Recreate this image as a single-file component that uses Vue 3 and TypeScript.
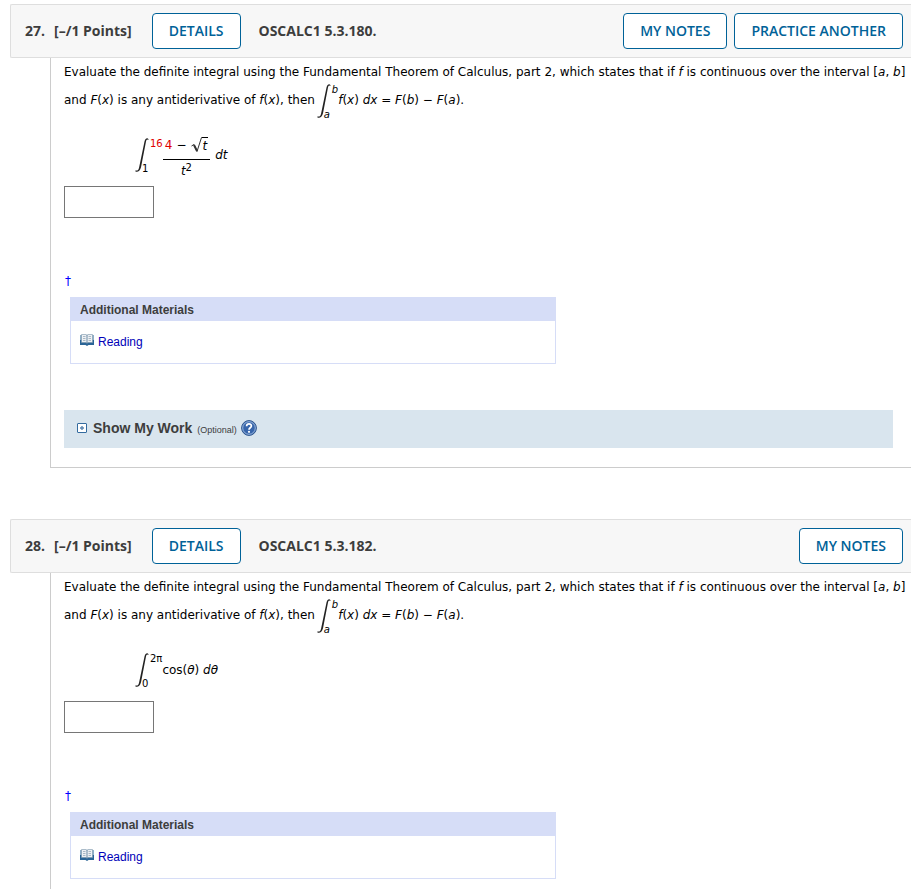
<script setup lang="ts">
interface Question {
  number: number
  source: string
  actions: string[]
  upper: string
  lower: string
  kind: 'fraction' | 'cosine'
  showWork: boolean
}

const questions: Question[] = [
  {
    number: 27,
    source: 'OSCALC1 5.3.180.',
    actions: ['MY NOTES', 'PRACTICE ANOTHER'],
    upper: '16',
    lower: '1',
    kind: 'fraction',
    showWork: true,
  },
  {
    number: 28,
    source: 'OSCALC1 5.3.182.',
    actions: ['MY NOTES'],
    upper: '2π',
    lower: '0',
    kind: 'cosine',
    showWork: false,
  },
]

const integralPath =
  'M13.5 2.2C12.8 .7 10.4 .6 9.5 4.4L4.1 30.4C3.5 33.4 1.8 34.2 .6 33.2L.4 34.4C2.3 35.4 5 34.4 6 30.2L11 4.6C11.4 2.4 12.2 1.8 13.3 3Z'
</script>

<template>
  <main class="page">
    <article v-for="q in questions" :key="q.number" class="question">
      <header class="bar">
        <span class="number">{{ q.number }}.</span>
        <span class="points">[–/1 Points]</span>
        <button type="button" class="btn">DETAILS</button>
        <span class="source">{{ q.source }}</span>
        <div class="actions">
          <button v-for="a in q.actions" :key="a" type="button" class="btn">{{ a }}</button>
        </div>
      </header>

      <section class="body">
        <p class="prompt">
          <span>Evaluate the definite integral using the Fundamental Theorem of Calculus, part 2, which states that if
          <i>f</i> is continuous over the interval [<i>a</i>, <i>b</i>]</span> <span>and <i>F</i>(<i>x</i>) is any
          antiderivative of <i>f</i>(<i>x</i>), then <span class="integral inline">
            <svg class="sign" viewBox="0 0 14 36" aria-hidden="true"><path :d="integralPath" /></svg>
            <span class="limits"><i>b</i><i class="lower">a</i></span>
          </span><i>f</i>(<i>x</i>) <i>dx</i> = <i>F</i>(<i>b</i>) − <i>F</i>(<i>a</i>).</span>
        </p>

        <div class="expression">
          <span class="integral">
            <svg class="sign" viewBox="0 0 14 36" aria-hidden="true"><path :d="integralPath" /></svg>
            <span class="limits">
              <span :class="{ given: q.kind === 'fraction' }">{{ q.upper }}</span>
              <span class="lower">{{ q.lower }}</span>
            </span>
          </span>
          <template v-if="q.kind === 'fraction'">
            <span class="fraction">
              <span class="numerator">
                <span class="given">4</span><span class="minus">−</span>
                <svg class="radical" viewBox="0 0 11 16" aria-hidden="true">
                  <path d="M.5 9L3 7.5L6 14.5L10.5 .5H11" />
                  <path class="thick" d="M3 8L6 14" />
                </svg>
                <i class="radicand">t</i>
              </span>
              <span class="denominator"><i>t</i><sup>2</sup></span>
            </span>
            <i class="differential">dt</i>
          </template>
          <span v-else>cos(<i>θ</i>) <i>dθ</i></span>
        </div>

        <input class="answer" type="text" :aria-label="`Answer to question ${q.number}`" />

        <a class="dagger" href="#">†</a>

        <section class="materials">
          <h3>Additional Materials</h3>
          <a class="reading" href="#">
            <svg class="book" viewBox="0 0 14 12" aria-hidden="true">
              <path fill="#8fb0c8" d="M0 1H14V7H0Z" />
              <path fill="#2a6496" d="M0 6H14V11H8.5L7 12L5.5 11H0Z" />
              <path fill="#eef1f4" stroke="#7894aa" stroke-width=".6" d="M1.5 .5H6L7 1.2L8 .5H12.5V8.5H8L7 9.3L6 8.5H1.5Z" />
              <path fill="#a9b8c5" d="M3 2H5.5V3H3ZM3 4H5.5V5H3ZM3 6H5.5V7H3ZM8.5 2H11V3H8.5ZM8.5 4H11V5H8.5ZM8.5 6H11V7H8.5Z" />
              <path fill="#4f7595" d="M6.6 1H7.4V9.5H6.6Z" />
            </svg>
            <span>Reading</span>
          </a>
        </section>

        <div v-if="q.showWork" class="work">
          <button type="button" class="toggle">
            <svg class="plus" viewBox="0 0 10 10" aria-hidden="true">
              <rect x=".5" y=".5" width="9" height="9" rx=".5" fill="#fff" stroke="#336b9f" />
              <path d="M3 5H7M5 3V7" stroke="#5c86b0" stroke-width="1.4" />
            </svg>
            <span class="title">Show My Work</span>
            <span class="optional">(Optional)</span>
          </button>
          <button type="button" class="help" aria-label="Help">
            <svg viewBox="0 0 16 16" aria-hidden="true">
              <circle cx="8" cy="8" r="7.4" fill="#3765ab" stroke="#30578f" />
              <circle cx="8" cy="8" r="6.3" fill="none" stroke="#a5bfe2" stroke-width=".9" />
              <path d="M5.6 6.2C5.7 3.2 10.5 3.3 10.4 6C10.3 7.8 8 7.8 8 9.7" fill="none" stroke="#fff" stroke-width="1.7" />
              <circle cx="8" cy="11.8" r="1.1" fill="#fff" />
            </svg>
          </button>
        </div>
      </section>
    </article>
  </main>
</template>

<style>
body {
  background: #fff;
}
</style>

<style scoped>
* {
  box-sizing: border-box;
}

.page {
  height: 100vh;
  overflow: hidden;
  padding: 4px 0 0 10px;
  font-family: Verdana, 'DejaVu Sans', sans-serif;
  font-size: 12px;
  color: #000;
}

.question {
  margin-bottom: 51px;
}

.bar {
  display: flex;
  align-items: center;
  height: 54px;
  padding: 0 8px 0 14px;
  border: 1px solid #dedede;
  border-right: 0;
  border-radius: 2px 0 0 2px;
  background: #f7f7f7;
  font: 700 14px/20px 'Open Sans', sans-serif;
  color: #3d3d3d;
  white-space: nowrap;
}

.points {
  margin: 0 20px 0 9px;
}

.source {
  margin-left: 18px;
}

.actions {
  display: flex;
  gap: 7px;
  margin-left: auto;
}

.btn {
  height: 36px;
  padding: 0 16px;
  border: 1px solid #006298;
  border-radius: 4px;
  background: #fff;
  font: 600 14px/20px 'Open Sans', sans-serif;
  color: #006298;
}

.body {
  display: flex;
  flex-direction: column;
  align-items: flex-start;
  margin-left: 40px;
  padding: 0 18px 19px 13px;
  border-left: 1px solid #ccc;
  border-bottom: 1px solid #ccc;
}

.prompt {
  margin: 0 -16px 0 0;
  line-height: 28px;
}

.integral {
  display: inline-flex;
  height: 36px;
}

.inline {
  margin: -3px 0 -5px -2px;
  vertical-align: -15px;
}

.sign {
  width: 14px;
  height: 36px;
  fill: #222;
}

.limits {
  display: flex;
  flex-direction: column;
  justify-content: space-between;
  margin: 1px 0 -1px 1px;
  font-size: 10px;
  line-height: 11px;
}

.lower {
  margin-left: -8px;
}

.given {
  color: #e00000;
}

.expression {
  display: flex;
  align-items: center;
  height: 46px;
  margin: 18px 0 8px 71px;
}

.fraction {
  display: flex;
  flex-direction: column;
  align-items: center;
  margin-top: 6px;
}

.numerator {
  display: flex;
  align-items: flex-end;
  height: 23px;
  padding: 0 2px 6px;
  border-bottom: 1px solid #000;
  line-height: 16px;
}

.minus {
  margin: 0 5px 0 4px;
}

.radical {
  width: 11px;
  height: 16px;
  fill: none;
  stroke: #333;
}

.thick {
  stroke-width: 2;
}

.radicand {
  height: 16px;
  padding-right: 1px;
  border-top: 1px solid #000;
}

.denominator {
  padding-top: 2px;
  line-height: 18px;
}

.denominator sup {
  font-size: 10px;
  line-height: 1;
  vertical-align: 4px;
}

.differential {
  margin-left: 5px;
}

.answer {
  width: 90px;
  height: 32px;
  padding: 0 6px;
  border: 1px solid #767676;
  background: #fff;
  font: inherit;
}

.dagger {
  margin: 55px 0 0 1px;
  line-height: 16px;
  color: #00f;
  text-decoration: none;
}

.materials {
  width: 486px;
  max-width: 100%;
  height: 67px;
  margin: 8px 0 0 6px;
  border: 1px solid #d6ddf7;
  font: 12px/16px 'Liberation Sans', Arial, sans-serif;
}

.materials h3 {
  margin: 0;
  padding: 4px 9px 3px;
  background: #d6ddf7;
  font-size: 12px;
  line-height: 16px;
  color: #3d3d3d;
}

.reading {
  display: flex;
  align-items: flex-start;
  gap: 4px;
  width: max-content;
  margin: 13px 0 0 9px;
  color: #0000b8;
  text-decoration: none;
}

.book {
  width: 14px;
  height: 12px;
}

.work {
  display: flex;
  align-items: center;
  align-self: stretch;
  gap: 4px;
  height: 38px;
  margin-top: 46px;
  padding: 0 13px 2px;
  background: #d9e5ee;
}

.toggle {
  display: flex;
  align-items: center;
  padding: 0;
  border: 0;
  background: none;
  color: #3d3d3d;
}

.plus {
  width: 10px;
  height: 10px;
}

.title {
  margin: 0 5px 0 6px;
  font: 700 14px/18px 'Liberation Sans', Arial, sans-serif;
}

.optional {
  padding-top: 3px;
  font: 9px/14px 'Liberation Sans', Arial, sans-serif;
}

.help {
  display: flex;
  width: 16px;
  height: 16px;
  padding: 0;
  border: 0;
  background: none;
}

.help svg {
  width: 16px;
  height: 16px;
}
</style>
